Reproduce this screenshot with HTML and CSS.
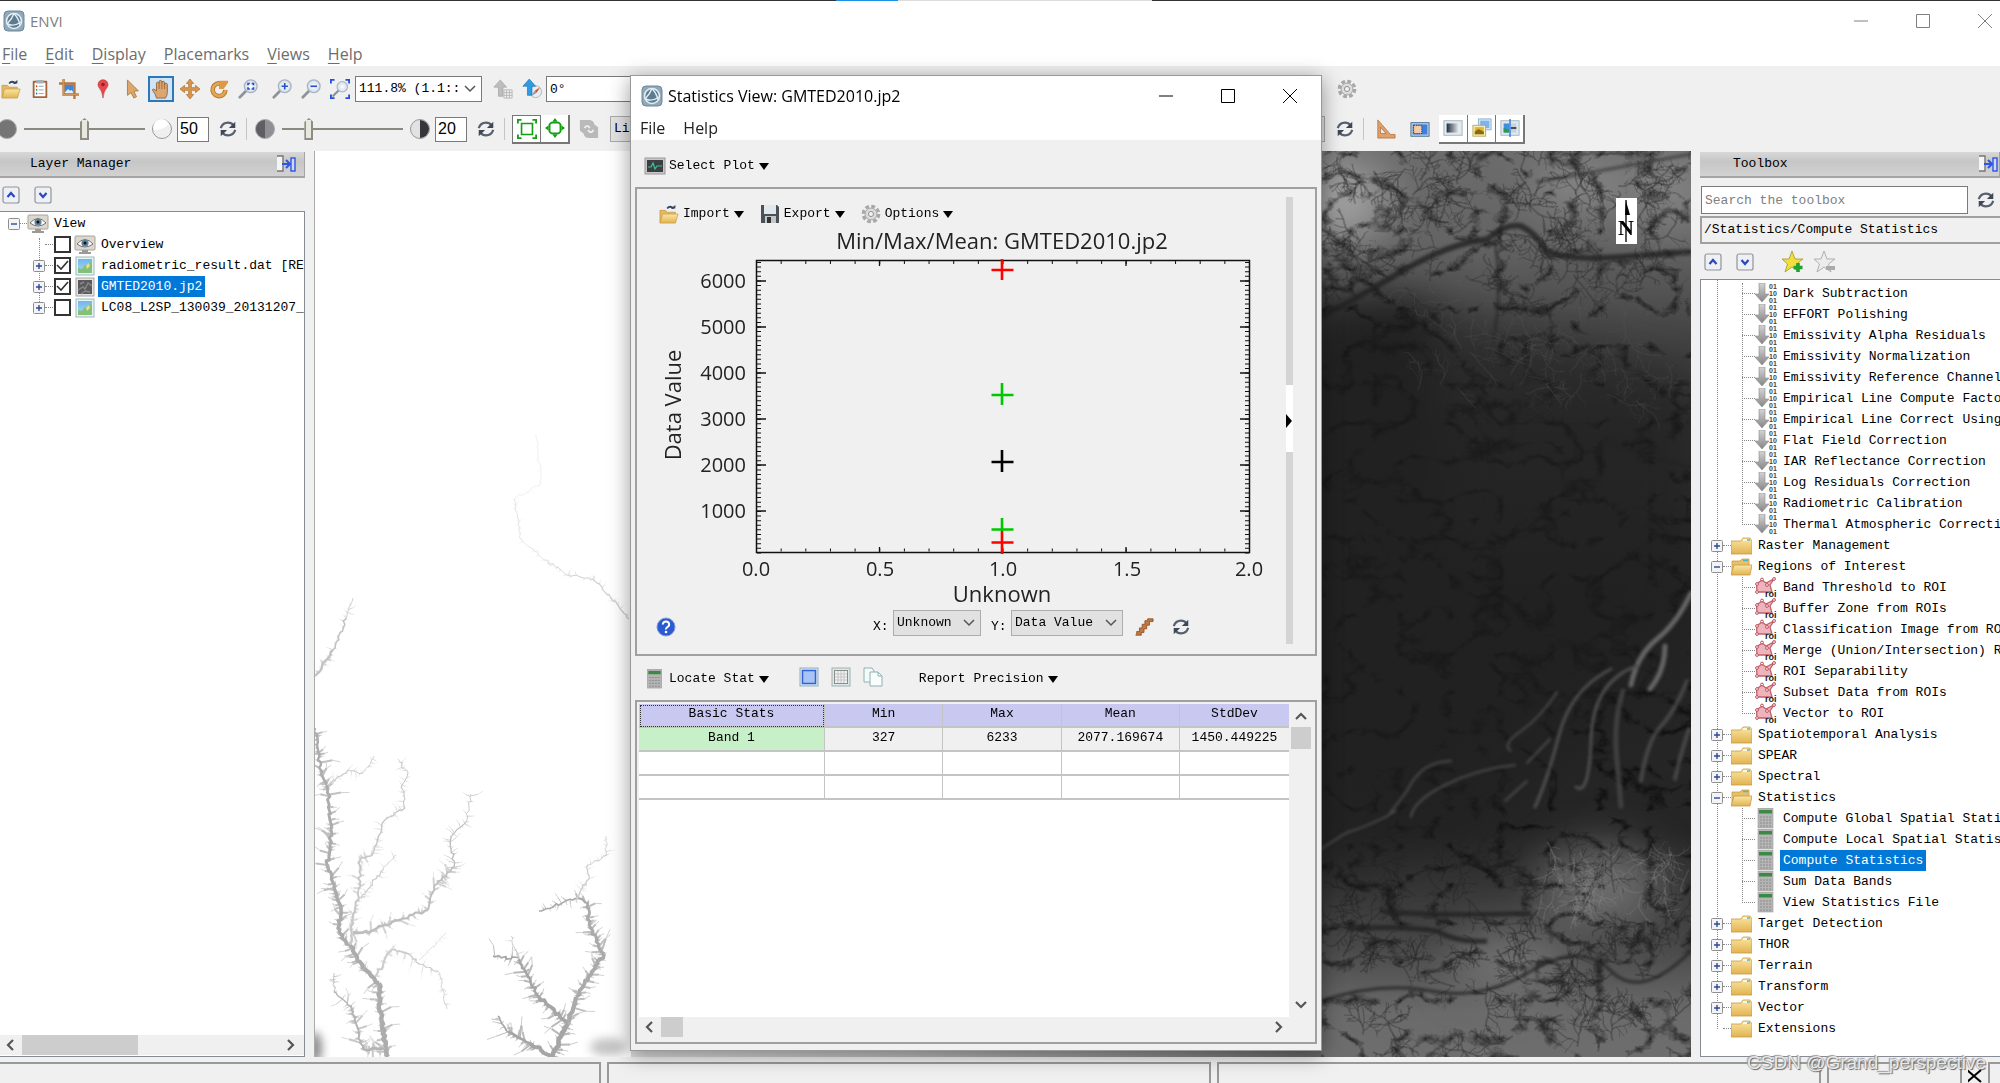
FILE: index.html
```html
<!DOCTYPE html>
<html lang="en">
<head>
<meta charset="utf-8">
<title>ENVI</title>
<link rel="stylesheet" href="styles.css">
</head>
<body>
<svg class="defs" aria-hidden="true">
  <defs>
    <linearGradient id="gold" x1="0" y1="0" x2="0" y2="1"><stop offset="0" stop-color="#fbe6a2"/><stop offset="1" stop-color="#e2b352"/></linearGradient>
    <linearGradient id="grey" x1="0" y1="0" x2="0" y2="1"><stop offset="0" stop-color="#d4d4d4"/><stop offset="1" stop-color="#858585"/></linearGradient>
    <linearGradient id="sky" x1="0" y1="0" x2="0" y2="1"><stop offset="0" stop-color="#6fb6ea"/><stop offset="1" stop-color="#a9dcf0"/></linearGradient>
    <linearGradient id="ramp"><stop offset="0" stop-color="#222c3a"/><stop offset="1" stop-color="#f4f6f8"/></linearGradient>
    <radialGradient id="lens"><stop offset="0" stop-color="#fff"/><stop offset="1" stop-color="#cfdcec"/></radialGradient>

    <symbol id="logo" viewBox="0 0 22 22"><rect x="1" y="1" width="20" height="20" rx="4" fill="#8fa9bb" stroke="#6b8799"/><circle cx="11" cy="11" r="7.5" fill="#5d7c91" stroke="#e4edf2" stroke-width="1.6"/><path d="M4 14Q9 9 11 3.5M11 3.5Q16 9 17 15M4.500 14Q11 17 18 12" fill="none" stroke="#e4edf2" stroke-width="1.4"/></symbol>
    <symbol id="open" viewBox="0 0 22 22"><path d="M1 20V7h6l2 2h9v11z" fill="#e3b965" stroke="#b8862c" stroke-width=".6"/><path d="M1 21l3-10h17l-3 10z" fill="url(#gold)" stroke="#c99a42" stroke-width=".8"/><path d="M9 5q3-4 7 0" fill="none" stroke="#33475e" stroke-width="2"/><path d="M13 5h5v-4z" fill="#33475e"/></symbol>
    <symbol id="clip" viewBox="0 0 22 22"><rect x="3" y="2" width="16" height="19" rx="1" fill="#a5643c"/><rect x="5" y="4" width="12" height="15" fill="#fff"/><rect x="7" y="1" width="8" height="4" rx="1" fill="#a9b0b5"/><path d="M9.500 8H15M9.500 12H15M9.500 16H15" stroke="#8c9aa8"/><path d="M6.500 8h1.500" stroke="#d33" stroke-width="2"/><path d="M6.500 12h1.500" stroke="#3a3" stroke-width="2"/><path d="M6.500 16h1.500" stroke="#36c" stroke-width="2"/></symbol>
    <symbol id="crop" viewBox="0 0 22 22"><rect x="6" y="6" width="10" height="10" fill="#3f86e0"/><path d="M6 15l4-4 2 2 2-1 2 3v1H6z" fill="#dff0ff"/><path d="M5 0v17h17M0 5h17v17" fill="none" stroke="#b8773c" stroke-width="2.6"/><path d="M5 0v17h17" fill="none" stroke="#d79c62" stroke-width="1"/></symbol>
    <symbol id="pin" viewBox="0 0 22 22"><path d="M11 21Q10 13 7 10A5.500 5.500 0 1 1 15 10Q12 13 11 21z" fill="#e8474b" stroke="#b93236" stroke-width=".6"/><circle cx="11" cy="6" r="2" fill="#8c2428"/></symbol>
    <symbol id="arrow" viewBox="0 0 22 22"><path d="M6 1v17l4-3 3 6 3-1.500-3-6 5-.5z" fill="#dca86a" stroke="#9c6c36" stroke-width=".8"/></symbol>
    <symbol id="hand" viewBox="0 0 22 22"><path d="M6 21Q5 16 2 13q-1-2 1-2l3 2V5q0-1.500 1.300-1.500T9 5V3q0-1.500 1.300-1.500T12 3v1q0-1.500 1.400-1.500T15 4v2q0-1.300 1.400-1.300T18 6v8q0 4-2 7z" fill="#dca673" stroke="#8c5a2e" stroke-width=".9"/><path d="M9 5v6M12 4v7M15 6v5" stroke="#8c5a2e" stroke-width=".8"/></symbol>
    <symbol id="move" viewBox="0 0 22 22"><path d="M11 0l4 5h-2.500v4.500H17V7l5 4-5 4v-2.500h-4.500V17H15l-4 5-4-5h2.500v-4.500H5V15l-5-4 5-4v2.500h4.500V5H7z" fill="#d9964a" stroke="#a8672a" stroke-width=".7"/></symbol>
    <symbol id="rot" viewBox="0 0 22 22"><path d="M14 5.500A7 7 0 1 0 18 12" fill="none" stroke="#b87828" stroke-width="5"/><path d="M14 5.500A7 7 0 1 0 18 12" fill="none" stroke="#e3a558" stroke-width="3"/><path d="M11 11V2h10v2l-5 7z" fill="#dc9a48"/></symbol>
    <symbol id="glass" viewBox="0 0 22 22"><path d="M9 13l-7 7" stroke="#8c939b" stroke-width="3" stroke-linecap="round"/><circle cx="14" cy="8" r="7" fill="url(#lens)" stroke="#aab4bf" stroke-width="1.400"/></symbol>
    <symbol id="zfit" viewBox="0 0 22 22"><use href="#glass"/><path d="M11 7V5h2M15 5h2v2M17 9v2h-2M13 11h-2V9" fill="none" stroke="#2450c8" stroke-width="1.800"/></symbol>
    <symbol id="zin" viewBox="0 0 22 22"><use href="#glass"/><path d="M14 4.500v7M10.500 8h7" stroke="#2450c8" stroke-width="1.800"/></symbol>
    <symbol id="zout" viewBox="0 0 22 22"><use href="#glass"/><path d="M10.500 8h7" stroke="#2450c8" stroke-width="1.800"/></symbol>
    <symbol id="zext" viewBox="0 0 22 22"><g transform="translate(2 2) scale(.82)"><use href="#glass" width="22" height="22"/></g><path d="M1 5V1h4M17 1h4v4M21 17v4h-4M5 21H1v-4" fill="none" stroke="#2450e0" stroke-width="2"/></symbol>
    <symbol id="north" viewBox="0 0 22 22"><path d="M8 1l7 8h-4v10H6V9H1z" fill="#bdbdbd" stroke="#a0a0a0" stroke-width=".7"/><path d="M12 12h9v9h-9zM12 15h9M12 18h9M15 12v9M18 12v9" fill="none" stroke="#b5b5b5"/></symbol>
    <symbol id="compass" viewBox="0 0 22 22"><circle cx="15" cy="14" r="6.500" fill="#e8eef2" stroke="#a8b4bc"/><path d="M8 0l7 8h-4v10H6V8H1z" fill="#2f9be0" stroke="#1a74b5" stroke-width=".7"/><path d="M20 9l-6 4 2 2z" fill="#e0452f"/><path d="M10 19l6-4-2-2z" fill="#8d98a0"/></symbol>
    <symbol id="gear" viewBox="0 0 22 22"><circle cx="11" cy="11" r="8.500" fill="none" stroke="#a8a8a8" stroke-width="3.600" stroke-dasharray="4.200 2.480"/><circle cx="11" cy="11" r="6.500" fill="#dcdcdc" stroke="#a2a2a2"/><circle cx="11" cy="11" r="2.800" fill="#f2f2f6" stroke="#888"/></symbol>
    <symbol id="ref" viewBox="0 0 22 22"><path d="M3 10Q5 4 11 4q4 0 6 3M19 12q-2 6-8 6-4 0-6-3" fill="none" stroke="#56606e" stroke-width="2.400"/><path d="M19 3v7h-7zM3 19v-7h7z" fill="#3d4756"/></symbol>
    <symbol id="b0" viewBox="0 0 22 22"><circle cx="11" cy="11" r="9.500" fill="#757575" stroke="#aaa"/></symbol>
    <symbol id="b1" viewBox="0 0 22 22"><circle cx="11" cy="11" r="9.500" fill="#efefef" stroke="#999"/><path d="M3 12A8 8 0 0 1 18 6Q12 12 3 12z" fill="#fff"/></symbol>
    <symbol id="c0" viewBox="0 0 22 22"><circle cx="11" cy="11" r="9.500" fill="#8f8f94" stroke="#aaa"/><path d="M11 2a9 9 0 0 0 0 18z" fill="#5e5e64"/></symbol>
    <symbol id="c1" viewBox="0 0 22 22"><circle cx="11" cy="11" r="9.500" fill="#e2e2e2" stroke="#999"/><path d="M11 2a9 9 0 0 1 0 18z" fill="#35353c"/></symbol>
    <symbol id="ext1" viewBox="0 0 22 22"><path d="M5 5h12v12H5z" fill="none" stroke="#12a012" stroke-width="1.800"/><path d="M1 5V1h4M17 1h4v4M21 17v4h-4M5 21H1v-4" fill="none" stroke="#12a012" stroke-width="2"/></symbol>
    <symbol id="ext2" viewBox="0 0 22 22"><path d="M7 5h8l2 2v8l-2 2H7l-2-2V7z" fill="none" stroke="#12a012" stroke-width="2"/><path d="M11 0l3 4H8zM11 22l3-4H8zM0 11l4-3v6zM22 11l-4-3v6z" fill="#12a012"/></symbol>
    <symbol id="sync" viewBox="0 0 22 22"><path d="M1 1h10q5 0 6 5l4 3v12H11q-5 0-6-5L1 13z" fill="#b9b9b9"/><path d="M6 10q3-5 6 0M10 12q3 5 6 0" fill="none" stroke="#eee" stroke-width="2"/></symbol>
    <symbol id="tri" viewBox="0 0 22 22"><path fill-rule="evenodd" d="M2 1l14 16h5v4H2zM5 9v7h6z" fill="#e0a06a" stroke="#ad6a38" stroke-width=".8"/></symbol>
    <symbol id="pic" viewBox="0 0 22 22"><rect x="1" y="4" width="20" height="15" fill="#b5cad8" stroke="#4f6f88"/><rect x="3" y="6" width="16" height="11" fill="#3c7fe0"/><rect x="4" y="7" width="9" height="9" fill="#f4c9a4" stroke="#5b2c1c" stroke-dasharray="1.500 1"/></symbol>
    <symbol id="p1" viewBox="0 0 22 22"><rect x="1" y="3" width="20" height="16" fill="#dfe9ee" stroke="#9fb4be"/><rect x="4" y="6" width="14" height="10" fill="url(#ramp)"/></symbol>
    <symbol id="p2" viewBox="0 0 22 22"><rect x="7" y="1" width="14" height="12" fill="#cfe4f8" stroke="#8fb0c8"/><rect x="9" y="3" width="10" height="8" fill="#7db4ec"/><rect x="1" y="8" width="14" height="12" fill="#f8edb8" stroke="#b5a860"/><path d="M3 10h10v8H3z" fill="#e0b62c"/><path d="M3 18v-3l4-3 6 3v3z" fill="#836a14"/></symbol>
    <symbol id="p3" viewBox="0 0 22 22"><rect x="1" y="3" width="20" height="16" fill="#dfe9ee" stroke="#9fb4be"/><rect x="4" y="6" width="6" height="10" fill="#3c8fe0"/><path d="M4 11l6 2v3H4z" fill="#2b9a50"/><path d="M12 6h6v10h-6z" fill="#c5d2d8"/><path d="M12 11h6" stroke="#35434c" stroke-width="2"/><path d="M11 1v20" stroke="#2466e8" stroke-width="1.400"/></symbol>
    <symbol id="dock" viewBox="0 0 20 18"><path d="M0 1h6v15H0" fill="#f5f5f5" stroke="#777" stroke-width="1.400"/><path d="M5 9h7M9 5l4 4-4 4" fill="none" stroke="#2e55e0" stroke-width="2"/><rect x="14" y="3" width="4" height="13" fill="#cddaff" stroke="#2e55e0" stroke-width="1.400"/></symbol>
    <symbol id="upb" viewBox="0 0 18 18"><rect x="1" y="1" width="16" height="16" rx="2" fill="#eef0f5" stroke="#8f949c" stroke-width="1.200"/><path d="M5.500 11L9 7l3.500 4" fill="none" stroke="#2a48c0" stroke-width="2.200"/></symbol>
    <symbol id="dnb" viewBox="0 0 18 18"><rect x="1" y="1" width="16" height="16" rx="2" fill="#eef0f5" stroke="#8f949c" stroke-width="1.200"/><path d="M5.500 7L9 11l3.500-4" fill="none" stroke="#2a48c0" stroke-width="2.200"/></symbol>
    <symbol id="star" viewBox="0 0 22 22"><path d="M10 0l3 8h8l-6.500 5 2.500 8-7-5-7 5 2.500-8L0 8h7z" fill="#f2de3c" stroke="#a3962c" stroke-width=".8"/><path d="M16 12v9M11.500 16.500h9" stroke="#1ea32c" stroke-width="3.600"/></symbol>
    <symbol id="staroff" viewBox="0 0 22 22"><path d="M10 0l3 8h8l-6.500 5 2.500 8-7-5-7 5 2.500-8L0 8h7z" fill="#ececec" stroke="#b0b0b0" stroke-width="1"/><path d="M12 17h9" stroke="#aaa" stroke-width="4"/></symbol>
    <symbol id="plus" viewBox="0 0 12 12"><rect x=".5" y=".5" width="11" height="11" rx="1" fill="#f4f4f4" stroke="#8e8e8e"/><path d="M6 3v6M3 6h6" stroke="#2a4a9a" stroke-width="1.400"/></symbol>
    <symbol id="minus" viewBox="0 0 12 12"><rect x=".5" y=".5" width="11" height="11" rx="1" fill="#f4f4f4" stroke="#8e8e8e"/><path d="M3 6h6" stroke="#2a4a9a" stroke-width="1.400"/></symbol>
    <symbol id="eye" viewBox="0 0 22 20"><rect x="1" y="1" width="20" height="14" rx="1" fill="#dcd8d0" stroke="#a8a49c"/><path d="M8 15h6v2h3v2H5v-2h3z" fill="#9a9a98"/><path d="M3 9q8-9 16 0-8 6-16 0z" fill="#fff" stroke="#555" stroke-width=".8"/><circle cx="11" cy="8" r="3.600" fill="#5f8298"/><circle cx="11" cy="8" r="1.500" fill="#111"/></symbol>
    <symbol id="ras" viewBox="0 0 20 20"><rect x="1" y="1" width="18" height="18" fill="#e6f2f4" stroke="#9db8bc"/><rect x="3" y="3" width="14" height="14" fill="url(#sky)"/><path d="M3 17v-5l4 1 3-4 2 1 3-4 2 1v10z" fill="#83c078"/><path d="M11 10l3-3 1 3-3 3z" fill="#efdc7a"/></symbol>
    <symbol id="dem" viewBox="0 0 20 20"><rect x="1" y="1" width="18" height="18" fill="#e4e4e4" stroke="#a5a5a5"/><rect x="3" y="3" width="14" height="14" fill="#5a5a5a"/><path d="M3 13l5-3 2 2 3-6 4 3M6 17l4-3 5 1M5 7l4-2" fill="none" stroke="#888" stroke-width="1.400"/></symbol>
    <symbol id="tool" viewBox="0 0 22 21"><path d="M3 0h6v11h4L6 19l-7-8h4z" transform="translate(1)" fill="url(#grey)" stroke="#8a8a8a" stroke-width=".6"/><g font-family="Liberation Sans" font-weight="bold" font-size="7" fill="#444"><text x="14" y="6">01</text><text x="14" y="13">10</text><text x="14" y="20">01</text></g></symbol>
    <symbol id="roi" viewBox="0 0 22 21"><path d="M1.500 7L7 3l4 3 8-4-4 6 2 7H2z" fill="#eeb4bb" stroke="#c2606c" stroke-width="1.300"/><g fill="#fff" stroke="#b94e5c"><circle cx="2" cy="7" r="1.400"/><circle cx="7" cy="2.500" r="1.400"/><circle cx="19" cy="2" r="1.400"/><circle cx="2" cy="15" r="1.400"/><circle cx="12" cy="8" r="1.400"/></g><text x="10" y="20" font-family="Liberation Sans" font-weight="bold" font-size="9" fill="#222">roi</text></symbol>
    <symbol id="fold" viewBox="0 0 21 18"><path d="M0 4h10l2-3h7l2 3v13H0z" fill="url(#gold)" stroke="#c79a45" stroke-width=".8"/><path d="M12 3h7" stroke="#fdf6d8" stroke-width="2"/><path d="M16 3h3" stroke="#45b8d8" stroke-width="1.500"/></symbol>
    <symbol id="foldo" viewBox="0 0 21 18"><path d="M1 16V3h8l2-2h7v15z" fill="#e7c06b" stroke="#c79a45" stroke-width=".8"/><path d="M12 2.500h5" stroke="#45b8d8" stroke-width="1.500"/><path d="M0 17l3-10h18l-2 10z" fill="url(#gold)" stroke="#c79a45" stroke-width=".8"/></symbol>
    <symbol id="calc" viewBox="0 0 22 21"><rect x="3" y="0" width="15" height="20" fill="#b5b5b5" stroke="#999" stroke-width=".6"/><rect x="4" y="2" width="13" height="3.500" fill="#3a8a46"/><path d="M5 9h11M5 12h11M5 15h11M5 18h11" stroke="#8a8a8a" stroke-dasharray="2 1"/></symbol>
    <symbol id="plot" viewBox="0 0 22 18"><rect x="1" y="1" width="20" height="16" fill="#c8c8c8" stroke="#999"/><rect x="3" y="3" width="16" height="12" fill="#3b3f42"/><path d="M4 10h3l2-4 2 6 2-3h5" fill="none" stroke="#3fc0a0" stroke-width="1.200"/></symbol>
    <symbol id="save" viewBox="0 0 20 20"><path d="M1 1h16l2 2v16H1z" fill="#4c5157"/><rect x="4" y="1" width="12" height="9" fill="#dfe8ec"/><rect x="5" y="12" width="11" height="7" fill="#c3c7ca"/><rect x="7" y="13" width="4" height="6" fill="#333"/></symbol>
    <symbol id="help" viewBox="0 0 20 20"><circle cx="10" cy="10" r="9" fill="#2a5bd0" stroke="#7d98dc"/><path d="M6.800 7.500Q7 4.500 10 4.500t3.200 3Q13.200 9 11.500 10T10 12.500" fill="none" stroke="#fff" stroke-width="2"/><circle cx="10" cy="15" r="1.300" fill="#fff"/></symbol>
    <symbol id="stairs" viewBox="0 0 22 22"><path d="M2 20h6v-3h3v-4h3v-4h3V5h4V2h-6v2h-3v4H9v4H6v4H3v2z" fill="#c47840" stroke="#8c4c20" stroke-width=".9"/></symbol>
    <symbol id="sel" viewBox="0 0 20 20"><rect x="1" y="1" width="18" height="18" fill="#d8e6f0" stroke="#8fb0bc"/><rect x="3.500" y="3.500" width="13" height="13" fill="#a8c4f4" stroke="#2f62dc" stroke-width="1.500"/></symbol>
    <symbol id="grid" viewBox="0 0 20 20"><rect x="1" y="1" width="18" height="18" fill="#dde8e8" stroke="#9fb0b0"/><rect x="3.500" y="3.500" width="13" height="13" fill="#f2f2f2" stroke="#8c8c8c"/><path d="M4 7h12M4 10h12M4 13h12M7 4v12M10 4v12M13 4v12" stroke="#bbb" stroke-width=".8"/></symbol>
    <symbol id="copy" viewBox="0 0 20 20"><path d="M1 1h8l2 3v11H1z" fill="#f3fafa" stroke="#8fb0b0"/><path d="M7 5h8l4 4v10H7z" fill="#f8fdfd" stroke="#8fb0b0"/><path d="M15 5v4h4" fill="none" stroke="#8fb0b0"/></symbol>
    <symbol id="chl" viewBox="0 0 10 14"><path d="M8 2L3 7l5 5" fill="none" stroke="#555" stroke-width="2.200"/></symbol>
    <symbol id="chr" viewBox="0 0 10 14"><path d="M2 2l5 5-5 5" fill="none" stroke="#555" stroke-width="2.200"/></symbol>
  </defs>
</svg>

<div class="app">
  <header class="titlebar">
    <svg class="i22"><use href="#logo"/></svg><span class="app-name">ENVI</span>
    <div class="controls">
      <button aria-label="Minimize"><svg viewBox="0 0 14 14"><path d="M0 7h14"/></svg></button>
      <button aria-label="Maximize"><svg viewBox="0 0 14 14"><path d="M.5.5h13v13H.5z"/></svg></button>
      <button aria-label="Close"><svg viewBox="0 0 14 14"><path d="M0 0l14 14M14 0L0 14"/></svg></button>
    </div>
  </header>
  <nav class="menubar">
    <button><u>F</u>ile</button><button><u>E</u>dit</button><button><u>D</u>isplay</button><button><u>P</u>lacemarks</button><button><u>V</u>iews</button><button><u>H</u>elp</button>
  </nav>

  <div class="toolbar">
    <div class="row">
      <div class="group">
        <button class="tb" aria-label="Open"><svg><use href="#open"/></svg></button>
        <button class="tb" aria-label="Data manager"><svg><use href="#clip"/></svg></button>
        <button class="tb" aria-label="Crop"><svg><use href="#crop"/></svg></button>
      </div>
      <div class="group">
        <button class="tb" aria-label="Placemark"><svg><use href="#pin"/></svg></button>
        <button class="tb" aria-label="Select"><svg><use href="#arrow"/></svg></button>
        <button class="tb active" aria-label="Pan"><svg><use href="#hand"/></svg></button>
        <button class="tb" aria-label="Fly"><svg><use href="#move"/></svg></button>
        <button class="tb" aria-label="Rotate"><svg><use href="#rot"/></svg></button>
        <button class="tb" aria-label="Zoom"><svg><use href="#zfit"/></svg></button>
      </div>
      <div class="group">
        <button class="tb" aria-label="Zoom in"><svg><use href="#zin"/></svg></button>
        <button class="tb" aria-label="Zoom out"><svg><use href="#zout"/></svg></button>
        <button class="tb" aria-label="Full extent"><svg><use href="#zext"/></svg></button>
      </div>
      <select class="combo zoom" aria-label="Zoom level"><option>111.8% (1.1::1)</option></select>
      <div class="group north">
        <button class="tb" aria-label="Top up"><svg><use href="#north"/></svg></button>
        <button class="tb" aria-label="North up"><svg><use href="#compass"/></svg></button>
      </div>
      <input class="field angle" aria-label="Rotation" value="0°">
      <input class="field goto" aria-label="Go to">
      <button class="tb" aria-label="Preferences"><svg><use href="#gear"/></svg></button>
    </div>
    <div class="row second">
      <svg class="i22 dark-end"><use href="#b0"/></svg>
      <input type="range" aria-label="Brightness" value="50">
      <svg class="i22"><use href="#b1"/></svg>
      <input class="num" aria-label="Brightness value" value="50">
      <button class="tb" aria-label="Reset brightness"><svg><use href="#ref"/></svg></button>
      <i class="sep"></i>
      <svg class="i22"><use href="#c0"/></svg>
      <input type="range" aria-label="Contrast" value="20">
      <svg class="i22"><use href="#c1"/></svg>
      <input class="num" aria-label="Contrast value" value="20">
      <button class="tb" aria-label="Reset contrast"><svg><use href="#ref"/></svg></button>
      <i class="sep"></i>
      <div class="raised"><button class="in" aria-label="Stretch on view extent"><svg><use href="#ext1"/></svg></button><button aria-label="Stretch on full extent"><svg><use href="#ext2"/></svg></button></div>
      <button class="tb" aria-label="Update stretch"><svg><use href="#sync"/></svg></button>
      <select class="combo stretch" aria-label="Stretch type"><option>Linear 2%</option></select>
      <button class="tb" aria-label="Reset stretch"><svg><use href="#ref"/></svg></button>
      <i class="sep"></i>
      <button class="tb measure" aria-label="Measure"><svg><use href="#tri"/></svg></button>
      <button class="tb measure" aria-label="Chip"><svg><use href="#pic"/></svg></button>
      <div class="raised"><button aria-label="Blend"><svg><use href="#p1"/></svg></button><button aria-label="Flicker"><svg><use href="#p2"/></svg></button><button aria-label="Swipe"><svg><use href="#p3"/></svg></button></div>
    </div>
  </div>

  <main class="work">
    <section class="layers">
      <h2 class="panel-head">Layer Manager<svg><use href="#dock"/></svg></h2>
      <div class="mini"><button aria-label="Collapse"><svg><use href="#upb"/></svg></button><button aria-label="Expand"><svg><use href="#dnb"/></svg></button></div>
      <div class="tree-box">
        <ul class="tree layer-tree">
          <li class="root"><svg class="ex"><use href="#minus"/></svg><i class="dash"></i><svg class="mon"><use href="#eye"/></svg>View</li>
          <li><svg class="ex none"></svg><i class="dash"></i><label><input type="checkbox"><svg class="mon"><use href="#eye"/></svg><span>Overview</span></label></li>
          <li><svg class="ex"><use href="#plus"/></svg><i class="dash"></i><label><input type="checkbox" checked><svg class="mon"><use href="#ras"/></svg><span>radiometric_result.dat [RED</span></label></li>
          <li><svg class="ex"><use href="#plus"/></svg><i class="dash"></i><label><input type="checkbox" checked><svg class="mon"><use href="#dem"/></svg><span class="hit">GMTED2010.jp2</span></label></li>
          <li><svg class="ex"><use href="#plus"/></svg><i class="dash"></i><label><input type="checkbox"><svg class="mon"><use href="#ras"/></svg><span>LC08_L2SP_130039_20131207_</span></label></li>
        </ul>
        <div class="hscroll"><svg><use href="#chl"/></svg><i class="thumb wide"></i><svg class="end"><use href="#chr"/></svg></div>
      </div>
    </section>

    <section class="map">
      <svg id="terrain" viewBox="314 150 1376 907" preserveAspectRatio="xMidYMin slice">
        <defs>
          <filter id="relief" x="0" y="0" width="1" height="1" color-interpolation-filters="sRGB"><feTurbulence type="turbulence" baseFrequency=".02 .026" numOctaves="6" seed="12"/><feColorMatrix values="2.600 0 0 0 .3  2.600 0 0 0 .3  2.600 0 0 0 .3  0 0 0 0 1"/></filter>
          <filter id="soft" x="-1" y="-1" width="3" height="3" color-interpolation-filters="sRGB"><feGaussianBlur stdDeviation="22"/></filter>
          <filter id="soft2" color-interpolation-filters="sRGB"><feGaussianBlur stdDeviation="1.500"/></filter>
          <filter id="soft3" x="-1" y="-1" width="3" height="3"><feGaussianBlur stdDeviation="5"/></filter>
          <filter id="soft4" color-interpolation-filters="sRGB"><feGaussianBlur stdDeviation=".7"/></filter>
          <linearGradient id="ground" x1="0" y1="0" x2="0" y2="1"><stop offset="0" stop-color="#6c6c6c"/><stop offset=".1" stop-color="#646464"/><stop offset=".19" stop-color="#484848"/><stop offset=".3" stop-color="#303030"/><stop offset=".5" stop-color="#242424"/><stop offset=".75" stop-color="#262626"/><stop offset=".87" stop-color="#464646"/><stop offset=".95" stop-color="#6a6a6a"/><stop offset="1" stop-color="#6e6e6e"/></linearGradient>
          <linearGradient id="strip"><stop offset="0" stop-color="#ddd"/><stop offset=".4" stop-color="#bbb"/><stop offset=".8" stop-color="#888"/><stop offset="1" stop-color="#666"/></linearGradient>
          <clipPath id="east"><path d="M1300 150h390v907H1300z"/></clipPath>
        </defs>
        <path d="M314 150h1376v907H314z" fill="#fff"/>
        <g id="snow" filter="url(#soft4)"></g>
        <ellipse cx="607" cy="1046" rx="18" ry="9" opacity=".7" fill="#aaa" filter="url(#soft3)"/>
        <ellipse cx="314" cy="1047" rx="7" ry="16" fill="#888" filter="url(#soft3)"/>
        <g clip-path="url(#east)">
          <path d="M1300 150h390v907H1300z" fill="url(#ground)"/>
          <g filter="url(#soft)">
            <ellipse cx="1335" cy="200" rx="55" ry="40" fill="#b4b4b4" opacity=".75"/>
            <ellipse cx="1580" cy="185" rx="50" ry="22" fill="#969696" opacity=".8"/>
            <ellipse cx="1670" cy="190" rx="35" ry="40" fill="#909090" opacity=".7"/>
            <ellipse cx="1600" cy="885" rx="60" ry="40" fill="#7c7c7c" opacity=".8"/>
            <ellipse cx="1510" cy="960" rx="60" ry="30" fill="#7c7c7c" opacity=".8"/>
            <path d="M1300 300h130l10 120 10 200-50 120-100 60z" fill="#242424"/>
          </g>
          <path d="M1300 150h390v907H1300z" filter="url(#relief)" style="mix-blend-mode:multiply"/>
          <path d="M1300 350l80-50 310 70v220l-60 110-150 130-180 60z" fill="#202020" opacity=".6" filter="url(#soft)"/>
          <g filter="url(#soft2)" fill="none">
            <g stroke="#777" stroke-linecap="round" opacity=".8">
              <path d="M1690 592Q1676 622 1656 638T1630 684M1664 645q0 25-15 43" stroke-width="5"/>
              <path d="M1610 668Q1570 688 1558 734T1534 806M1636 665Q1592 680 1590 738T1575 786" stroke-width="3" stroke="#5c5c5c"/>
              <path d="M1622 690Q1612 720 1616 760L1620 805" stroke-width="5" stroke="#484848"/>
              <path d="M1556 691Q1540 716 1520 730T1510 750M1549 738l-23 24M1514 764q-38 4-70 20t-34 32M1526 780l-22 20M1450 760q-30 0-44 30l-20 26M1395 810q-24 14-50 22l-25 16" stroke-width="2" stroke="#585858"/>
              <path d="M1686 680Q1674 710 1660 725T1640 780M1688 728q-10 30-14 50" stroke-width="4" stroke="#505050"/>
            </g>
            <g stroke="#222" opacity=".8">
              <path d="M1320 316Q1360 295 1403 269Q1450 242 1487 238Q1504 222 1520 225Q1536 233 1545 250Q1570 260 1620 256T1690 251" stroke-width="6"/>
              <path d="M1535 181q70-12 155-28" stroke-width="3" stroke="#3c3c3c"/>
              <path d="M1346 928q50-4 90 2 20 12 50 10M1380 910q60 6 150 2" stroke-width="5"/>
              <path d="M1320 1000q60-20 110-10t100-20 80 0 80-20" stroke-width="3"/>
              <path d="M1494 240q8 50-2 100M1600 440q60 20 90 26" stroke-width="2"/>
            </g>
          </g>
          <g id="valleys" filter="url(#soft4)"></g>
        </g>
        <path d="M630 1047h690v10H630z" fill="url(#strip)"/>
        <g><path d="M1615 197h21v46h-21z" fill="#fff"/><path d="M1625 199v42" stroke="#555" stroke-width="2"/><path d="M1625 200l4 14h-5z"/><text x="1625" y="234" font-family="Liberation Serif" font-weight="bold" font-size="22" text-anchor="middle">N</text></g>
      </svg>
    </section>

    <section class="toolbox">
      <h2 class="panel-head">Toolbox<svg><use href="#dock"/></svg></h2>
      <div class="search"><input type="search" aria-label="Search the toolbox" placeholder="Search the toolbox"><button class="tb" aria-label="Refresh"><svg><use href="#ref"/></svg></button></div>
      <div class="path">/Statistics/Compute Statistics</div>
      <div class="mini"><button aria-label="Collapse"><svg><use href="#upb"/></svg></button><button aria-label="Expand"><svg><use href="#dnb"/></svg></button><button class="fav" aria-label="Add favourite"><svg><use href="#star"/></svg></button><button class="fav" aria-label="Remove favourite"><svg><use href="#staroff"/></svg></button></div>
      <div class="tree-box">
        <ul class="tree tool-tree">
          <li class="branch"><ul>
            <li><svg><use href="#tool"/></svg>Dark Subtraction</li>
            <li><svg><use href="#tool"/></svg>EFFORT Polishing</li>
            <li><svg><use href="#tool"/></svg>Emissivity Alpha Residuals</li>
            <li><svg><use href="#tool"/></svg>Emissivity Normalization</li>
            <li><svg><use href="#tool"/></svg>Emissivity Reference Channel</li>
            <li><svg><use href="#tool"/></svg>Empirical Line Compute Facto</li>
            <li><svg><use href="#tool"/></svg>Empirical Line Correct Using</li>
            <li><svg><use href="#tool"/></svg>Flat Field Correction</li>
            <li><svg><use href="#tool"/></svg>IAR Reflectance Correction</li>
            <li><svg><use href="#tool"/></svg>Log Residuals Correction</li>
            <li><svg><use href="#tool"/></svg>Radiometric Calibration</li>
            <li><svg><use href="#tool"/></svg>Thermal Atmospheric Correcti</li>
          </ul></li>
          <li class="node"><svg class="ex"><use href="#plus"/></svg><i class="dash"></i><svg class="fo"><use href="#fold"/></svg>Raster Management</li>
          <li class="node"><svg class="ex"><use href="#minus"/></svg><i class="dash"></i><svg class="fo"><use href="#foldo"/></svg>Regions of Interest</li>
          <li class="branch"><ul>
            <li><svg><use href="#roi"/></svg>Band Threshold to ROI</li>
            <li><svg><use href="#roi"/></svg>Buffer Zone from ROIs</li>
            <li><svg><use href="#roi"/></svg>Classification Image from RO</li>
            <li><svg><use href="#roi"/></svg>Merge (Union/Intersection) R</li>
            <li><svg><use href="#roi"/></svg>ROI Separability</li>
            <li><svg><use href="#roi"/></svg>Subset Data from ROIs</li>
            <li><svg><use href="#roi"/></svg>Vector to ROI</li>
          </ul></li>
          <li class="node"><svg class="ex"><use href="#plus"/></svg><i class="dash"></i><svg class="fo"><use href="#fold"/></svg>Spatiotemporal Analysis</li>
          <li class="node"><svg class="ex"><use href="#plus"/></svg><i class="dash"></i><svg class="fo"><use href="#fold"/></svg>SPEAR</li>
          <li class="node"><svg class="ex"><use href="#plus"/></svg><i class="dash"></i><svg class="fo"><use href="#fold"/></svg>Spectral</li>
          <li class="node"><svg class="ex"><use href="#minus"/></svg><i class="dash"></i><svg class="fo"><use href="#foldo"/></svg>Statistics</li>
          <li class="branch"><ul>
            <li><svg><use href="#calc"/></svg>Compute Global Spatial Stati</li>
            <li><svg><use href="#calc"/></svg>Compute Local Spatial Statis</li>
            <li><svg><use href="#calc"/></svg><span class="hit">Compute Statistics</span></li>
            <li><svg><use href="#calc"/></svg>Sum Data Bands</li>
            <li><svg><use href="#calc"/></svg>View Statistics File</li>
          </ul></li>
          <li class="node"><svg class="ex"><use href="#plus"/></svg><i class="dash"></i><svg class="fo"><use href="#fold"/></svg>Target Detection</li>
          <li class="node"><svg class="ex"><use href="#plus"/></svg><i class="dash"></i><svg class="fo"><use href="#fold"/></svg>THOR</li>
          <li class="node"><svg class="ex"><use href="#plus"/></svg><i class="dash"></i><svg class="fo"><use href="#fold"/></svg>Terrain</li>
          <li class="node"><svg class="ex"><use href="#plus"/></svg><i class="dash"></i><svg class="fo"><use href="#fold"/></svg>Transform</li>
          <li class="node"><svg class="ex"><use href="#plus"/></svg><i class="dash"></i><svg class="fo"><use href="#fold"/></svg>Vector</li>
          <li class="node last"><svg class="ex none"></svg><i class="dash"></i><svg class="fo"><use href="#fold"/></svg>Extensions</li>
        </ul>
      </div>
    </section>
  </main>

  <footer class="status">
    <div></div><div></div><div></div><div></div>
    <button aria-label="Cancel"><svg viewBox="0 0 16 14"><path d="M1 1l14 12M15 1L1 13"/></svg></button>
    <div class="mem"></div>
  </footer>
  <div class="watermark">CSDN @Grand_perspective</div>
</div>

<section class="dialog" role="dialog" aria-label="Statistics View">
  <header class="dialog-title">
    <svg class="i22"><use href="#logo"/></svg><span>Statistics View: GMTED2010.jp2</span>
    <div class="controls">
      <button aria-label="Minimize"><svg viewBox="0 0 14 14"><path d="M0 7h14"/></svg></button>
      <button aria-label="Maximize"><svg viewBox="0 0 14 14"><path d="M.5.5h13v13H.5z"/></svg></button>
      <button aria-label="Close"><svg viewBox="0 0 14 14"><path d="M0 0l14 14M14 0L0 14"/></svg></button>
    </div>
  </header>
  <nav class="menubar"><button>File</button><button>Help</button></nav>
  <div class="bar select-plot"><button class="drop"><svg><use href="#plot"/></svg>Select Plot<i></i></button></div>
  <div class="box plot-box">
    <div class="plot-main">
      <div class="plot-tools">
        <button class="drop"><svg><use href="#open"/></svg>Import<i></i></button>
        <button class="drop"><svg><use href="#save"/></svg>Export<i></i></button>
        <button class="drop"><svg><use href="#gear"/></svg>Options<i></i></button>
      </div>
      <svg class="chart" viewBox="640 228 640 380" role="img" aria-label="Min/Max/Mean plot">
        <g fill="none" stroke="#111">
          <path d="M756.500 260.500H1249.500V552.500H756.500z" stroke-width="1.500"/>
          <path d="M759 553.400V260M1247 553.400V260" stroke-width="4" stroke-dasharray="1 3.610"/>
          <path d="M756 550H1250M756 262.500H1250" stroke-width="3" stroke-dasharray="1 23.650"/>
          <path d="M757 281h9M757 327h9M757 373h9M757 419h9M757 465h9M757 511h9M1249 281h-9M1249 327h-9M1249 373h-9M1249 419h-9M1249 465h-9M1249 511h-9M879.500 552v-5M1002.500 552v-5M1126 552v-5M879.500 261v5M1126 261v5" stroke-width="1.300"/>
        </g>
        <g fill="none" stroke-width="2.600">
          <path d="M1002 259v21M991.500 270h22" stroke="#f00"/>
          <path d="M1002 531v23M991.500 542.500h22" stroke="#f00"/>
          <path d="M1002 383v22M991.500 395h22" stroke="#00c800"/>
          <path d="M1002 518v13M991.500 529.500h22" stroke="#00c800"/>
          <path d="M1002 450v22M991.500 462h22" stroke="#000"/>
        </g>
        <g class="ticks" text-anchor="end"><text x="746" y="288">6000</text><text x="746" y="334">5000</text><text x="746" y="380">4000</text><text x="746" y="426">3000</text><text x="746" y="472">2000</text><text x="746" y="518">1000</text></g>
        <g class="ticks" text-anchor="middle"><text x="756" y="576">0.0</text><text x="880" y="576">0.5</text><text x="1003" y="576">1.0</text><text x="1127" y="576">1.5</text><text x="1249" y="576">2.0</text></g>
        <g class="names" text-anchor="middle"><text x="1002" y="249">Min/Max/Mean: GMTED2010.jp2</text><text x="1002" y="602">Unknown</text><text transform="translate(681 405) rotate(-90)">Data Value</text></g>
      </svg>
      <div class="axes">
        <button class="help" aria-label="Help"><svg><use href="#help"/></svg></button>
        <label for="xa">X:</label><select id="xa" class="combo flat x"><option>Unknown</option></select>
        <label for="ya">Y:</label><select id="ya" class="combo flat y"><option>Data Value</option></select>
        <button class="tb" aria-label="Steps"><svg><use href="#stairs"/></svg></button>
        <button class="tb" aria-label="Refresh"><svg><use href="#ref"/></svg></button>
      </div>
    </div>
    <div class="splitter"><i></i></div>
  </div>
  <div class="bar stat-bar">
    <button class="drop"><svg><use href="#calc"/></svg>Locate Stat<i></i></button>
    <div class="trio"><button aria-label="Select all"><svg><use href="#sel"/></svg></button><button aria-label="Grid"><svg><use href="#grid"/></svg></button><button aria-label="Copy"><svg><use href="#copy"/></svg></button></div>
    <button class="drop">Report Precision<i></i></button>
  </div>
  <div class="box table-box">
    <div class="sheet">
      <table>
        <colgroup><col class="first"><col><col><col><col class="final"></colgroup>
        <thead><tr><th>Basic Stats</th><th>Min</th><th>Max</th><th>Mean</th><th>StdDev</th></tr></thead>
        <tbody>
          <tr class="data"><th>Band 1</th><td>327</td><td>6233</td><td>2077.169674</td><td>1450.449225</td></tr>
          <tr><td></td><td></td><td></td><td></td><td></td></tr>
          <tr><td></td><td></td><td></td><td></td><td></td></tr>
        </tbody>
      </table>
    </div>
    <div class="vscroll"><svg class="up"><use href="#chl"/></svg><i></i><svg class="down"><use href="#chl"/></svg></div>
    <div class="hscroll"><svg><use href="#chl"/></svg><i class="thumb"></i><svg class="end"><use href="#chr"/></svg></div>
  </div>
</section>
<script src="terrain.js"></script>
</body>
</html>
```
FILE: styles.css
```css
* { box-sizing: border-box; }
body { margin: 0; background: #f0f0f0; color: #000; font: 13px/20px "Liberation Mono", monospace; overflow: hidden; }
button, input, select { font: inherit; color: inherit; margin: 0; border-radius: 0; }
button { background: none; border: 0; padding: 0; display: block; }
svg { display: block; flex: none; }
ul { list-style: none; margin: 0; padding: 0; }
.defs { position: absolute; width: 0; height: 0; }
.i22 { width: 22px; height: 22px; }

.app { min-height: 100vh; display: flex; flex-direction: column; position: relative; }
.titlebar { height: 41px; background: #fff; display: flex; align-items: center; padding-left: 3px; gap: 5px; color: #808080; font: 15px/20px "Open Sans", sans-serif; border-top: 1px solid; border-image: linear-gradient(90deg, #333 836px, #1a90e8 836px, #1a90e8 898px, #ddd 898px, #ddd 1152px, #333 1152px) 1; }
.controls { margin-left: auto; display: flex; }
.controls button { width: 62px; height: 30px; display: grid; place-items: center; }
.controls svg { width: 14px; height: 14px; fill: none; stroke: currentColor; overflow: visible; }
.titlebar .controls { margin-right: -16px; }
.menubar { height: 25px; background: #fff; display: flex; gap: 18px; padding-left: 2px; font: 16px/20px "Open Sans", sans-serif; align-items: center; color: #6d6d6d; }
.menubar u { text-underline-offset: 3px; }

.toolbar { height: 85px; padding-top: 9px; }
.row { display: flex; align-items: center; height: 28px; }
.second { margin-top: 12px; }
.group { display: flex; gap: 7px; margin-right: 12px; }
.group + .combo { margin-left: -8px; }
.group.north { margin: 0 3px 0 10px; }
.tb { width: 22px; height: 22px; flex: none; }
.tb svg, .raised svg { width: 20px; height: 20px; margin: 1px; }
.tb.active { width: 26px; height: 26px; margin: -2px; border: 2px solid #2d78b8; background: #cfe4f7; }
.combo { appearance: none; border: 1px solid #7a7a7a; padding: 0 22px 0 3px; height: 26px; background: #fff url("data:image/svg+xml,%3Csvg xmlns='http://www.w3.org/2000/svg' width='12' height='8'%3E%3Cpath d='M1 1l5 5 5-5' fill='none' stroke='%23555' stroke-width='1.500'/%3E%3C/svg%3E") no-repeat right 5px center; }
.zoom { width: 127px; }
.field { height: 26px; border: 1px solid #7a7a7a; background: #fff; padding: 0 3px; }
.angle { width: 104px; }
.goto { width: 236px; margin: 0 14px 0 436px; }
.dark-end { margin-left: -4px; }
input[type=range] { appearance: none; width: 121px; height: 22px; margin: 0 6px; background: linear-gradient(#8a8a80, #8a8a80) center / 100% 2px no-repeat; }
input[type=range]::-webkit-slider-thumb { appearance: none; width: 9px; height: 22px; background: #e8e8e0; border: 2px solid #8d8d82; clip-path: polygon(50% 0, 100% 4px, 100% 100%, 0 100%, 0 4px); }
.num { width: 32px; height: 25px; border: 1px solid #7a7a7a; padding: 0 2px; margin: 0 8px 0 4px; font: 16px "Liberation Sans", sans-serif; }
.row .sep { width: 1px; height: 22px; background: #c4c4c4; margin: 0 7px; }
.raised { display: flex; border-right: 2px solid #777; border-bottom: 2px solid #777; height: 29px; }
.raised button { width: 28px; height: 27px; background: #fff; padding: 2px 3px; }
.raised button + button { border-left: 1px solid #777; }
.raised .in { border: 1px solid #777; border-width: 1px 0 0 1px; }
.raised + .tb { margin: 0 10px 0 8px; }
.stretch { width: 715px; margin-right: 9px; background-color: #e3e3e3; border-color: #aaa; }
.measure { margin: 0 8px 0 4px; }

.work { flex: 1; display: grid; grid-template-columns: 305px minmax(0, 1fr) 300px; column-gap: 9px; }
.work > section { display: flex; flex-direction: column; min-width: 0; }
.panel-head { margin: 1px 0 0; height: 26px; padding: 0 7px 0 30px; font: inherit; display: flex; align-items: center; background: linear-gradient(#d8d8d8, #c6c6c6 40%, #d2d2d2); border: solid #a5a5a5; border-width: 0 1px 2px 0; }
.panel-head svg { width: 20px; height: 18px; margin-left: auto; }
.toolbox .panel-head { padding-left: 33px; padding-right: 0; }
.mini { display: flex; align-items: center; gap: 13px; height: 33px; padding-left: 2px; }
.mini svg { width: 18px; height: 18px; }
.tree-box { flex: 1; background: #fff; border: 1px solid #868b95; display: flex; flex-direction: column; overflow: hidden; }
.layers .tree-box { border-left: 0; }
.tree { white-space: nowrap; position: relative; }
.tree li { display: flex; align-items: center; }
.tree li, .tree label { height: 21px; }
.ex { width: 12px; height: 12px; position: relative; }
.dash { width: 8px; flex: none; border-top: 1px dotted #888; }
.hit { background: #0078d7; color: #fff; line-height: 21px; padding: 0 3px; margin: 0 -3px; }

.layer-tree { padding-top: 1px; }
.layer-tree::before { content: ""; position: absolute; left: 39px; top: 26px; height: 72px; border-left: 1px dotted #888; }
.layer-tree li { padding-left: 33px; }
.layer-tree .root { padding-left: 8px; }
.layer-tree .mon { width: 22px; height: 20px; margin-right: 5px; }
.root .dash { width: 7px; }
.layer-tree label { display: flex; align-items: center; flex: none; }
.layer-tree input { appearance: none; flex: none; width: 17px; height: 17px; border: 2px solid #333; background: #fff; margin: 0 3px 0 1px; }
.layer-tree input:checked { background: #fff url("data:image/svg+xml,%3Csvg xmlns='http://www.w3.org/2000/svg' width='13' height='13'%3E%3Cpath d='M1 6l4 4 7-8' fill='none' stroke='%23333' stroke-width='1.600'/%3E%3C/svg%3E"); }
.layers .mini { gap: 14px; }

.hscroll { display: flex; align-items: center; height: 20px; background: #f0f0f0; margin: auto 0 0; padding: 0 5px; }
.hscroll svg { width: 10px; height: 14px; }
.hscroll .thumb { width: 22px; height: 20px; background: #cdcdcd; margin-left: 7px; }
.hscroll .wide { width: 116px; }
.hscroll .end { margin-left: auto; }
.layers .hscroll { margin-bottom: 1px; padding-right: 8px; }

.map { border-left: 1px solid #aaa; overflow: hidden; position: relative; }
.map > svg { position: absolute; inset: 0; width: 100%; height: 100%; }

.search { display: flex; align-items: center; gap: 7px; margin-top: 8px; padding-left: 1px; }
.search input { flex: 1; min-width: 0; height: 28px; border: 1px solid #7a7a7a; padding: 0 3px; background: #fff; appearance: none; }
.search input::placeholder { color: #808080; opacity: 1; }
.search .tb { margin-right: 3px; }
.path { margin-top: 2px; height: 28px; border: 2px solid #a0a0a0; border-right: 0; padding: 2px 2px; }
.toolbox .mini { height: 35px; padding-left: 4px; gap: 14px; }
.toolbox .fav svg { width: 22px; height: 22px; }
.toolbox .fav { margin-left: 14px; }
.toolbox .fav + .fav { margin-left: -4px; }
.toolbox .tree-box { border-right: 0; }
.tool-tree { padding-top: 3px; }
.tool-tree::before { content: ""; position: absolute; left: 16px; top: 0; bottom: 10px; border-left: 1px dotted #888; }
.tool-tree .node { padding-left: 10px; }
.tool-tree .fo { width: 21px; height: 18px; margin-right: 6px; }
.tool-tree .branch { display: block; height: auto; padding-left: 41px; position: relative; }
.branch ul::before { content: ""; position: absolute; left: 41px; top: 0; bottom: 10px; border-left: 1px dotted #888; }
.branch li::before { content: ""; flex: none; width: 13px; border-top: 1px dotted #888; }
.branch li svg { width: 22px; height: 21px; margin-right: 6px; }

.status { height: 26px; padding-top: 5px; display: grid; grid-template-columns: 601px 604px 604px 135px 1fr 12px; column-gap: 6px; }
.status div { border: solid #999; border-width: 2px 2px 0; }
.status div:first-child { border-left: 0; }
.status button { display: flex; align-items: end; justify-content: end; overflow: hidden; }
.status button svg { width: 16px; height: 14px; stroke: #000; stroke-width: 2; }
.status .mem { border-right: 0; }
.watermark { position: absolute; right: 14px; bottom: 8px; font: 19px/24px "Liberation Sans", sans-serif; color: #e8e8e8; text-shadow: 1px 1px 1px #666, -1px -1px 1px #999; }

.dialog { position: absolute; left: 630px; top: 75px; width: 692px; background: #f0f0f0; border: 1px solid #999; box-shadow: 0 4px 20px rgba(0,0,0,.4); padding-bottom: 6px; }
.dialog-title { height: 39px; background: #fff; display: flex; align-items: center; padding-left: 10px; gap: 5px; font: 16px/20px "Open Sans", sans-serif; }
.dialog .menubar { color: #222; padding-left: 9px; }
.bar { display: flex; align-items: center; }
.select-plot { height: 47px; padding: 5px 0 0 13px; }
.drop { display: flex; align-items: center; gap: 3px; }
.drop svg { width: 22px; height: 20px; }
.drop i { border: 5px solid transparent; border-top: 7px solid #000; border-bottom: 0; margin-left: 1px; }
.box { border: 2px solid #a0a0a0; margin: 0 4px; }
.plot-box { height: 469px; display: flex; padding: 8px 22px 10px 3px; }
.plot-main { flex: 1; display: flex; flex-direction: column; }
.plot-tools { display: flex; gap: 15px; padding: 3px 0 0 18px; height: 31px; align-items: center; }
.chart { width: 640px; height: 380px; }
.chart text { font-family: "Open Sans", sans-serif; fill: #222; }
.ticks { font-size: 20px; }
.names { font-size: 22px; }
.axes { display: flex; align-items: center; height: 30px; padding-left: 16px; }
.axes label { padding: 8px 0 0; width: 20px; }
.help { width: 20px; height: 20px; margin: 8px 197px 0 0; }
.help svg { width: 20px; height: 20px; }
.flat { background-color: #e1e1e1; border-color: #adadad; }
.flat.x { width: 88px; margin-right: 10px; }
.flat.y { width: 112px; }
.axes .tb { margin: 8px 0 0 10px; }
.axes .tb + .tb { margin-left: 15px; }
.splitter { width: 7px; margin-left: 3px; background: linear-gradient(#d4d4d4 42%, #fff 42%, #fff 57%, #d4d4d4 57%); display: grid; align-items: center; }
.splitter i { border: 7px solid transparent; border-left: 6px solid #000; border-right: 0; }
.stat-bar { height: 44px; padding: 2px 0 0 13px; }
.trio { display: flex; gap: 12px; margin: 0 36px 4px 30px; }
.trio svg { width: 20px; height: 20px; }
.table-box { height: 344px; padding: 2px 3px 4px 2px; display: grid; grid-template: minmax(0, 1fr) 21px / minmax(0, 1fr) 23px; }
.sheet { background: #fff; }
table { width: 100%; table-layout: fixed; border-collapse: separate; border-spacing: 0; }
.first { width: 186px; }
.final { width: 109px; }
th, td { height: 24px; padding: 0 0 3px; border: 1px solid #c4c4c4; border-width: 0 1px 2px 0; font-weight: normal; text-align: center; line-height: 18px; }
th:last-child, td:last-child { border-right: 0; }
thead th { background: #c8c8f0; }
thead th:first-child { outline: 1px dotted #333; outline-offset: -2px; }
.data th { background: #c8f0c8; }
.data td { background: #f0f0f0; }
.vscroll { display: flex; flex-direction: column; align-items: center; padding: 5px 0 5px; }
.vscroll svg { width: 10px; height: 14px; }
.vscroll .up { transform: rotate(90deg); }
.vscroll .down { transform: rotate(-90deg); margin-top: auto; }
.vscroll i { width: 20px; height: 22px; background: #cdcdcd; margin-top: 4px; }
.table-box .hscroll { margin: 0; }
```
FILE: terrain.js
```js
// Draws branching river valleys on the elevation map.
(function () {
  var seed = 7;
  function rnd() { seed = (seed * 16807) % 2147483647; return seed / 2147483647; }
  var NS = 'http://www.w3.org/2000/svg';
  function add(group, d, width, color) {
    var p = document.createElementNS(NS, 'path');
    p.setAttribute('d', d); p.setAttribute('fill', 'none');
    p.setAttribute('stroke', color); p.setAttribute('stroke-width', width);
    p.setAttribute('stroke-linejoin', 'round');
    group.appendChild(p);
  }
  var snow = document.getElementById('snow');
  // [shade 0-255, width at tip, width at mouth, spur length, points from tip to mouth]
  var rivers = [
    [172, 3, 6, 8, [[314,727],[320,774],[327,788],[330,835],[326,864],[333,887],[340,906],[338,932],[350,946],[363,968],[378,982],[380,1019],[387,1056]]],
    [205, 1, 2, 4, [[373,755],[362,772],[347,769],[327,784]]],
    [200, 1, 3, 5, [[397,758],[407,772],[401,784],[404,807],[382,821],[372,852],[359,859],[358,897],[352,913],[350,944]]],
    [205, 1, 2, 4, [[395,854],[382,869],[360,897]]],
    [190, 1, 4, 6, [[470,793],[465,821],[450,836],[453,866],[433,885],[427,909],[400,918],[370,930],[352,932]]],
    [205, 1, 3, 5, [[446,1008],[437,970],[418,963],[408,953],[390,949],[375,975]]],
    [220, 1, 1, 4, [[445,932],[418,959]]],
    [180, 1, 4, 7, [[333,972],[333,991],[350,1005],[362,1048],[383,1048]]],
    [165, 2, 7, 9, [[492,955],[518,958],[538,996],[567,1022],[550,1056]]],
    [170, 2, 6, 8, [[538,910],[575,897],[587,902],[588,925],[603,953],[575,996],[567,1022]]],
    [205, 1, 2, 4, [[605,835],[606,854],[587,864],[588,878],[575,897]]],
    [165, 2, 6, 8, [[497,1015],[507,1031],[530,1043],[550,1056]]],
    [200, 1, 2, 5, [[510,935],[518,958]]],
    [236, 1, 1, 2, [[535,434],[540,482],[513,498]]],
    [222, 1, 1, 3, [[513,498],[520,538],[543,559]]],
    [208, 1, 2, 4, [[543,559],[567,574],[592,578],[610,597],[628,618]]],
    [195, 1, 4, 4, [[352,597],[345,618],[332,649],[314,675]]]
  ];
  rivers.forEach(function (r) {
    function grey(v) { v = Math.min(250, v); return 'rgb(' + v + ',' + v + ',' + v + ')'; }
    var pts = r[4], n = pts.length - 1;
    for (var i = 0; i < n; i++) {
      var a = pts[i], b = pts[i + 1], dx = b[0] - a[0], dy = b[1] - a[1];
      var len = Math.hypot(dx, dy), steps = Math.max(1, Math.round(len / 3));
      var w = r[1] + (r[2] - r[1]) * i / n, d = 'M' + a[0] + ' ' + a[1];
      for (var s = 1; s <= steps; s++) {
        var t = s / steps, k = s === steps ? 0 : 3;
        var x = a[0] + dx * t + (rnd() - .5) * k, y = a[1] + dy * t + (rnd() - .5) * k;
        d += 'L' + x + ' ' + y;
        for (var side = -1; side < 2; side += 2) {
          if (rnd() < .35) continue;
          var ang = Math.atan2(dy, dx) + Math.PI + side * (.8 + rnd() * .8), l = r[3] * (.2 + rnd() * rnd() * 1.6);
          var mx = x + Math.cos(ang) * l, my = y + Math.sin(ang) * l;
          ang += rnd() - .5;
          add(snow, 'M' + x + ' ' + y + 'L' + mx + ' ' + my, w > 2 ? 2 : 1, grey(r[0] + 20));
          add(snow, 'M' + mx + ' ' + my + 'l' + Math.cos(ang) * l * .7 + ' ' + Math.sin(ang) * l * .7, 1, grey(r[0] + 40));
        }
      }
      add(snow, d, w * .8, grey(r[0]));
    }
  });

  var valleys = document.getElementById('valleys');
  function grow(x, y, ang, len, w, color) {
    var d = 'M' + x + ' ' + y;
    for (var i = 0; i < len; i++) {
      ang += (rnd() - .5) * .9;
      x += Math.cos(ang) * 4; y += Math.sin(ang) * 4;
      d += 'L' + x + ' ' + y;
      if (rnd() < .5 && len > 2) grow(x, y, ang + (rnd() < .5 ? -1 : 1) * (.7 + rnd() * .5), (len - i) * .55, w * .7, color);
    }
    add(valleys, d, w, color);
  }
  for (var i = 0; i < 90; i++) grow(1320 + rnd() * 370, 150 + rnd() * 150, rnd() * 6.3, 5 + rnd() * 8, 2, 'rgba(40,40,40,.3)');
  for (i = 0; i < 60; i++) grow(1400 + rnd() * 290, 260 + rnd() * 140, rnd() * 6.3, 5 + rnd() * 7, 1.4, 'rgba(90,90,90,.22)');
  for (i = 0; i < 80; i++) grow(1320 + rnd() * 370, 850 + rnd() * 205, rnd() * 6.3, 5 + rnd() * 8, 2, 'rgba(35,35,35,.3)');
  for (i = 0; i < 30; i++) grow(1540 + rnd() * 150, 840 + rnd() * 60, 1 + rnd(), 5 + rnd() * 6, 1.6, 'rgba(150,150,150,.2)');
}());
```
